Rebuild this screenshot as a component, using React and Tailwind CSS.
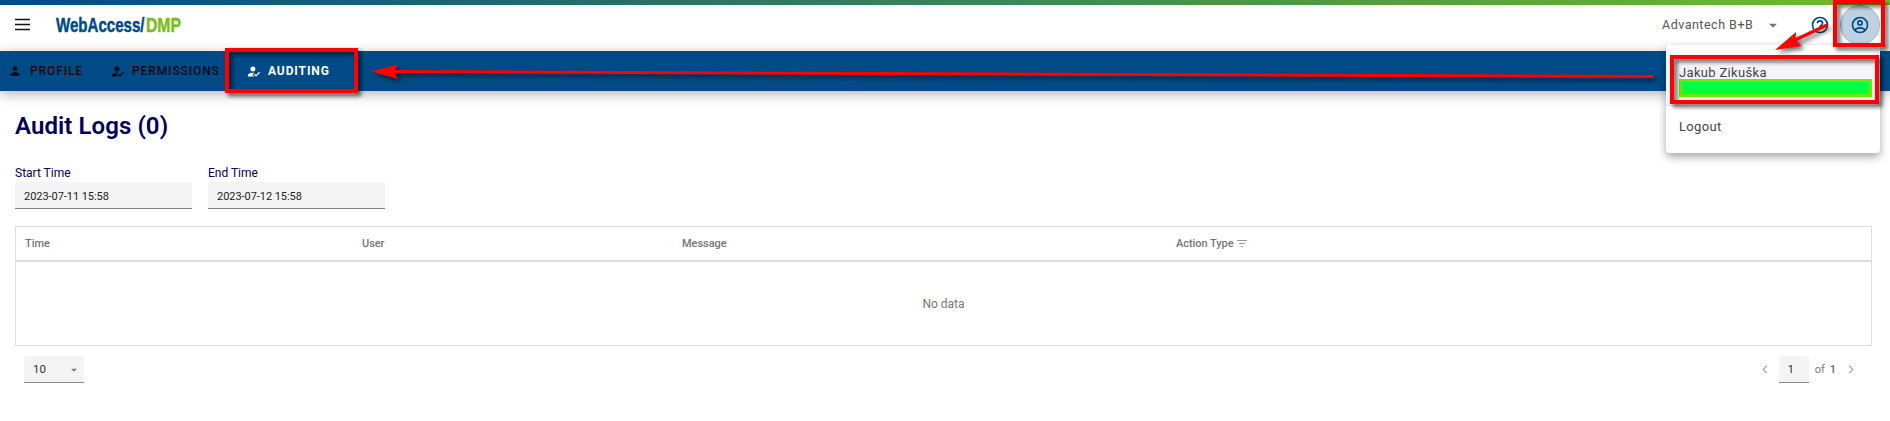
import React from "react";

const PERSON = "M12 4a4 4 0 0 1 4 4 4 4 0 0 1-4 4 4 4 0 0 1-4-4 4 4 0 0 1 4-4m0 10c4.42 0 8 1.79 8 4v2H4v-2c0-2.21 3.58-4 8-4Z";
const PERSON_CHECK = "m21.1 12.5 1.4 1.41-6.53 6.59L12.5 17l1.4-1.41 2.07 2.08 5.13-5.17M11 4a4 4 0 1 1 0 8 4 4 0 0 1 0-8m0 10c.7 0 1.4.05 2.1.14L10.2 17l2.9 3H3v-2c0-2.21 3.58-4 8-4Z";

function Icon({ d, className }) {
  return (
    <svg viewBox="0 0 24 24" fill="currentColor" className={"shrink-0 " + className}>
      <path d={d} />
    </svg>
  );
}

function Field({ label, value }) {
  return (
    <div className="w-[177px]">
      <div className="h-[20px] text-[12px] leading-[22px] text-[#00005c]">{label}</div>
      <div className="h-[27px] rounded-t-[2px] border-b border-[#858585] bg-[#f4f4f4] pl-[9px] text-[11px] leading-[29px] tracking-[-0.05px] text-[#222]">{value}</div>
    </div>
  );
}

export default function App() {
  return (
    <div className="relative h-[421px] w-[1890px] overflow-hidden bg-white font-['Roboto',sans-serif]">
      <div className="h-[5px] bg-linear-to-r/srgb from-[#004b87] to-[#78b82a]" />
      <header className="flex h-[46px] items-center bg-white">
        <svg viewBox="0 0 18 18" className="ml-[14px] mt-[-9px] h-[18px] w-[18px]">
          <path d="M1 4.5h15M1 9.5h15M1 14.5h15" stroke="#111" strokeWidth="1.3" />
        </svg>
        <svg width="134" height="30" className="ml-[24px] mt-[-7px] overflow-visible font-['Liberation_Sans',sans-serif] text-[20.5px] font-bold">
          <text x="0" y="22" textLength="88.500" lengthAdjust="spacingAndGlyphs" fill="#004b87" stroke="#004b87" strokeWidth="0.5">WebAccess/</text>
          <text x="90" y="22" textLength="35" lengthAdjust="spacingAndGlyphs" fill="#78be20" stroke="#78be20" strokeWidth="0.5">DMP</text>
        </svg>
        <div className="ml-auto mt-[-6px] flex items-center">
          <span className="w-[94px] text-[12.5px] tracking-[0.5px] whitespace-nowrap text-[#555]">Advantech B+B</span>
          <Icon d="m6 10 6 6 6-6Z" className="ml-[9px] h-[16px] w-[16px] text-[#757575]" />
          <Icon d="M11 18h2v-2h-2v2m1-16A10 10 0 1 0 12 22 10 10 0 0 0 12 2m0 18a8 8 0 1 1 0-16 8 8 0 0 1 0 16m0-14a4 4 0 0 0-4 4h2a2 2 0 1 1 4 0c0 2-3 1.75-3 5h2c0-2.25 3-2.5 3-5a4 4 0 0 0-4-4Z" className="ml-[29px] h-[20px] w-[20px] text-[#004b87]" />
          <div className="mr-[10px] ml-[10px] flex h-[40px] w-[40px] items-center justify-center rounded-full border border-[#a0b8cf] bg-[#bfd1e1]">
            <Icon d="M12 2A10 10 0 1 0 12 22 10 10 0 0 0 12 2M7.07 18.28c.43-.9 3.05-1.78 4.93-1.78s4.5.88 4.93 1.78A7.9 7.9 0 0 1 12 20c-1.86 0-3.57-.64-4.93-1.72m11.29-1.45c-1.43-1.74-4.9-2.33-6.36-2.33s-4.93.59-6.36 2.33A8 8 0 1 1 20 12c0 1.82-.62 3.5-1.64 4.83M12 6a3.5 3.5 0 1 0 0 7 3.5 3.5 0 0 0 0-7m0 5a1.5 1.5 0 1 1 0-3 1.5 1.5 0 0 1 0 3Z" className="h-[20px] w-[20px] text-[#004b87]" />
          </div>
        </div>
      </header>
      <nav className="flex h-[40px] items-center bg-[#004b87] text-[12px] font-medium tracking-[0.9px] text-[#000a14] shadow-[0_3px_12px_rgba(0,0,0,0.3)]">
        <div className="flex w-[101px] items-center pl-[8px]">
          <Icon d={PERSON} className="mr-[8px] h-[14px] w-[14px]" />PROFILE
        </div>
        <div className="flex w-[136px] items-center pl-[9px]">
          <Icon d={PERSON_CHECK} className="mr-[7px] h-[15px] w-[15px]" />PERMISSIONS
        </div>
        <div className="flex items-center pl-[9px] font-bold text-white">
          <Icon d={PERSON_CHECK} className="mr-[7px] h-[15px] w-[15px]" />AUDITING
        </div>
      </nav>

      <main className="px-[15px]">
        <h1 className="mt-[20px] h-[30px] text-[24px] leading-[30px] font-semibold tracking-[0.08px] text-[#00005c]">Audit Logs (0)</h1>
        <div className="mt-[21px] flex gap-[16px]">
          <Field label="Start Time" value="2023-07-11 15:58" />
          <Field label="End Time" value="2023-07-12 15:58" />
        </div>
        <section className="mt-[17px] h-[120px] w-[1857px] border border-[#ddd] text-[#757575]">
          <div className="grid h-[35px] grid-cols-[337px_320px_494px_1fr] items-center border-b-2 border-[#ddd] pt-[2px] pl-[9px] text-[11px] font-medium tracking-[-0.05px]">
            <span>Time</span>
            <span>User</span>
            <span>Message</span>
            <span className="flex items-center">
              Action Type
              <svg viewBox="0 0 10 8" className="mt-[-4px] ml-[3px] h-[8px] w-[10px]"><path d="M0 1.5h10M2 4.5h6M4 7.5h2" stroke="#999" strokeWidth="1" /></svg>
            </span>
          </div>
          <div className="flex h-[83px] items-center justify-center text-[12px]">No data</div>
        </section>
        <footer className="mt-[10px] flex h-[27px] items-center text-[11px] text-[#333]">
          <div className="ml-[9px] flex h-[27px] w-[60px] items-center justify-between rounded-t-[2px] border-b border-[#858585] bg-[#f4f4f4] pt-[1px] pr-[3px] pl-[9px] text-[11.5px]">
            10
            <Icon d="m7 10 5 5 5-5Z" className="h-[14px] w-[14px] text-[#777]" />
          </div>
          <div className="mr-[9px] ml-auto flex items-center">
            <svg viewBox="0 0 6 10" className="h-[9px] w-[6px]"><path d="m5 1-4 4 4 4" fill="none" stroke="#aaa" strokeWidth="1.5" /></svg>
            <div className="ml-[11px] h-[27px] w-[30px] rounded-t-[2px] border-b border-[#858585] bg-[#f4f4f4] pl-[9px] leading-[28px]">1</div>
            <span className="mt-[1px] ml-[6px] text-[#777]">of</span>
            <span className="mt-[1px] ml-[5px] font-medium text-[#666]">1</span>
            <svg viewBox="0 0 6 10" className="mr-[12px] ml-[12px] h-[9px] w-[6px]"><path d="m1 1 4 4-4 4" fill="none" stroke="#aaa" strokeWidth="1.5" /></svg>
          </div>
        </footer>
      </main>

      <div className="absolute top-[45px] left-[1666px] h-[108px] w-[214px] rounded-[4px] bg-white pt-[13px] text-[13px] tracking-[0.33px] text-[#444] shadow-[0_4px_8px_rgba(0,0,0,0.35)]">
        <div className="h-[48px] border-b border-[#ddd] bg-[#f5f5f5] pl-[13px]">
          <div className="h-[21px] leading-[29px]">Jakub Zikuška</div>
          <div className="h-[18px] w-[193px] border-[3px] border-[#70e800] bg-[#00ff40]" />
        </div>
        <div className="pl-[13px] leading-[42px]">Logout</div>
      </div>

      <div className="absolute top-[48px] left-[225px] h-[45px] w-[133px] border-4 border-[#ff0000] drop-shadow-[3px_3px_2px_rgba(0,0,0,0.65)]" />
      <div className="absolute top-[55px] left-[1670px] h-[49px] w-[209px] border-4 border-[#ff0000] drop-shadow-[3px_3px_2px_rgba(0,0,0,0.65)]" />
      <div className="absolute top-[0px] left-[1833px] h-[47px] w-[52px] border-4 border-[#ff0000] drop-shadow-[3px_3px_2px_rgba(0,0,0,0.65)]" />
      <svg viewBox="0 0 1890 421" className="absolute inset-0 h-[421px] w-[1890px] drop-shadow-[3px_3px_2px_rgba(0,0,0,0.55)]">
        <path d="M390 71.5 1652.5 76.5" stroke="#f00" strokeWidth="3" strokeLinecap="round" />
        <path d="m371 71.5 27-7-4 7 4 7.5Z" fill="#f00" />
        <path d="m1826 25.5-32 15" stroke="#f00" strokeWidth="3.5" strokeLinecap="round" />
        <path d="m1775 50 21-18-.5 7.5 6 6.5Z" fill="#f00" />
      </svg>
    </div>
  );
}
